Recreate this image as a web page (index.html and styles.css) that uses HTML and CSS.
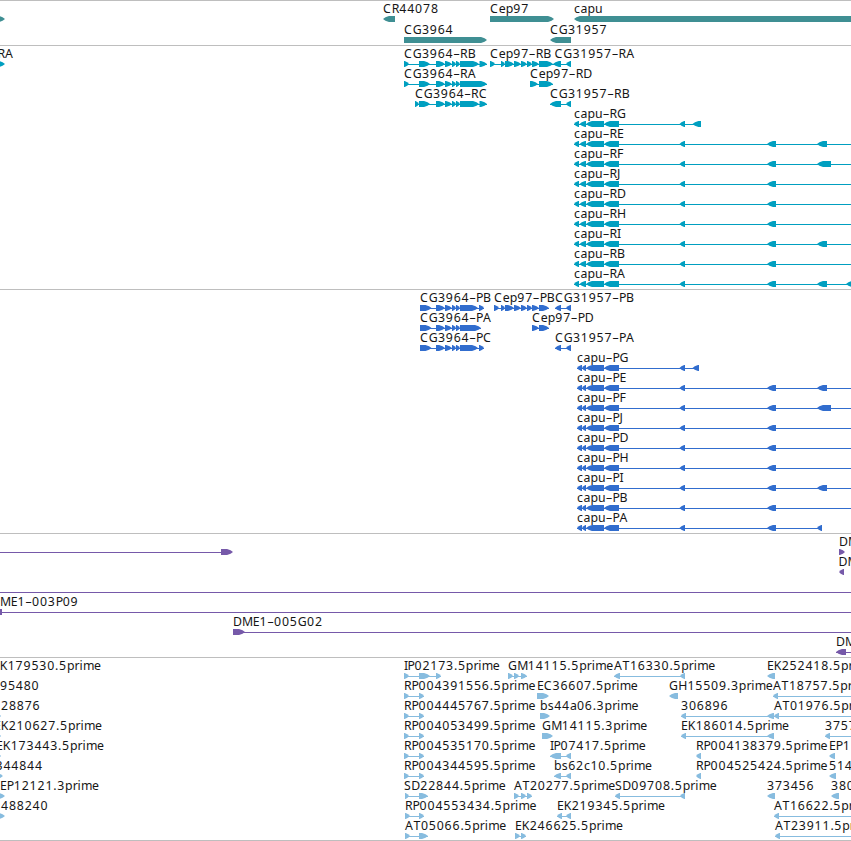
FILE: index.html
```html
<!DOCTYPE html>
<html lang="en">
<head>
    <meta charset="UTF-8">
    <meta name="viewport" content="width=device-width, initial-scale=1.0">
    <title>Genome Browser</title>
    <link rel="stylesheet" href="styles.css">
</head>
<body>
    <main class="browser">
        <svg class="track track-gene" id="genes"></svg>
        <svg class="track track-mrna" id="mrna"></svg>
        <svg class="track track-cds" id="cds"></svg>
        <svg class="track track-bac" id="bac"></svg>
        <svg class="track track-est" id="est"></svg>
    </main>
    <script src="tracks.js"></script>
</body>
</html>
```

FILE: styles.css
```css
body {
    margin: 0;
    background: white;
    overflow: hidden;
}
.browser {
    display: flex;
    flex-direction: column;
    border-bottom: 1px solid #bebebe;
}
.track {
    display: block;
    width: 100%;
    box-sizing: border-box;
    border-top: 1px solid #bebebe;
    overflow: hidden;
}
.track-gene {
    height: 45px;
    fill: #3f8f93;
}
.track-mrna {
    height: 244px;
    fill: #009fc0;
}
.track-cds {
    height: 244px;
    fill: #316dce;
}
.track-bac {
    height: 124px;
    fill: #7659a9;
}
.track-est {
    height: 183px;
    fill: #87bcdf;
}
.intron {
    shape-rendering: crispEdges;
}
.label {
    font-family: "Noto Sans", "Open Sans", sans-serif;
    font-size: 12.3px;
    fill: #161616;
}
```

FILE: tracks.js
```js
const SVG_NS = 'http://www.w3.org/2000/svg';
const FONT_UNIT = 0.0125;

// glyph advances, 1/1000 em
const ADVANCE = {
    '-': 530, '.': 316,
    a: 555, b: 622, c: 514, e: 560, i: 280, m: 880, p: 610, r: 390, s: 511, u: 630,
    A: 686, B: 561, C: 694, D: 730, E: 545, F: 520, G: 740, H: 735, I: 280, J: 276,
    K: 632, M: 847, P: 558, R: 610, S: 577, T: 583
};

function add(svg, tag, attrs) {
    const el = document.createElementNS(SVG_NS, tag);
    for (const key in attrs) el.setAttribute(key, attrs[key]);
    svg.appendChild(el);
    return el;
}

function drawLabel(svg, x, y, text) {
    const xs = [];
    for (const ch of text) {
        xs.push(x.toFixed(1));
        x += (ADVANCE[ch] || 632) * FONT_UNIT;
    }
    // en dash, a plain hyphen is too short here
    add(svg, 'text', { class: 'label', x: xs.join(' '), y: y }).textContent = text.replace('-', '–');
}

function drawExon(svg, a, b, y, dir) {
    const head = Math.min(7, b - a);
    const tip = dir > 0 ? b : a;
    const back = dir > 0 ? a : b;
    const neck = tip - dir * head * 0.85;
    const mid = tip - dir * head * 0.35;
    const points = [[back, y], [neck, y], [mid, y + 1.3], [tip, y + 3], [mid, y + 4.7], [neck, y + 6], [back, y + 6]];
    add(svg, 'polygon', { points: points.map(p => p.join(',')).join(' ') });
}

// feature: [row, labelX, name, direction, [exon start, end, ...], lineStart, lineEnd]
function drawTrack(id, features, pitch = 20) {
    const svg = document.getElementById(id);
    for (const [row, x, name, dir, ex, from, to] of features) {
        const base = 12 + row * pitch;
        const start = from === undefined ? ex[0] : from;
        const end = to === undefined ? ex[ex.length - 1] : to;
        if (ex.length > 2 || to !== undefined) {
            add(svg, 'rect', { class: 'intron', x: start, y: base + 6, width: end - start, height: 1 });
        }
        for (let i = 0; i < ex.length; i += 2) drawExon(svg, ex[i], ex[i + 1], base + 3, dir);
        if (name) drawLabel(svg, x, base, name);
    }
}

drawTrack('genes', [
    [0, 0, '', 1, [-40, 5]],
    [0, 383, 'CR44078', -1, [383, 395]],
    [0, 490, 'Cep97', 1, [490, 554]],
    [0, 574, 'capu', -1, [574, 900]],
    [1, 404, 'CG3964', 1, [404, 487]],
    [1, 550, 'CG31957', -1, [550, 571]]
], 21);

const cgMid = [436, 445, 445, 452, 452, 456, 456, 460];
const cepMid = [501, 505, 505, 514, 514, 521, 521, 527, 527, 532, 532, 539];
const capuTail = [586, 604, 604, 619, 679.5, 685];
const ex2 = [767, 776];
const ex3 = [817, 827];

function capuRows(prefix, head, last) {
    const x = head[0];
    const base = head.concat(capuTail);
    return [
        [3, x, prefix + 'G', -1, base.concat(last)],
        [4, x, prefix + 'E', -1, base.concat(ex2, ex3), x, 860],
        [5, x, prefix + 'F', -1, base.concat(ex2, [817, 831]), x, 860],
        [6, x, prefix + 'J', -1, base.concat(ex2), x, 860],
        [7, x, prefix + 'D', -1, base.concat(ex2), x, 860],
        [8, x, prefix + 'H', -1, base.concat(ex2), x, 860],
        [9, x, prefix + 'I', -1, base.concat(ex2, ex3), x, 860],
        [10, x, prefix + 'B', -1, base.concat(ex2), x, 860]
    ];
}

drawTrack('mrna', [
    [0, -2.5, 'RA', 1, [-4, 5]],
    [0, 404, 'CG3964-RB', 1, [404, 409, 419, 430, ...cgMid, 460, 479, 479.5, 487]],
    [0, 490, 'Cep97-RB', 1, [490, 495, ...cepMid, 539, 553]],
    [0, 554.5, 'CG31957-RA', -1, [553, 561, 566, 571]],
    [1, 404, 'CG3964-RA', 1, [404, 409, 419, 430, ...cgMid, 460, 487]],
    [1, 530, 'Cep97-RD', 1, [530, 538, 539, 553]],
    [2, 415, 'CG3964-RC', 1, [415, 419, 419, 430, ...cgMid, 460, 479, 479.5, 487]],
    [2, 550, 'CG31957-RB', -1, [550, 561, 566, 571]],
    ...capuRows('capu-R', [574, 579, 579.5, 586], [692.5, 701]),
    [11, 574, 'capu-RA', -1, [574, 579, 579.5, 586, ...capuTail, ...ex2, ...ex3, 846, 858]]
]);

drawTrack('cds', [
    [0, 420, 'CG3964-PB', 1, [420, 431.5, ...cgMid, 460, 478, 479, 484]],
    [0, 494, 'Cep97-PB', 1, [494, 499, ...cepMid, 539, 549]],
    [0, 555, 'CG31957-PB', -1, [555, 561, 566, 571]],
    [1, 420, 'CG3964-PA', 1, [420, 431.5, ...cgMid, 460, 481]],
    [1, 532, 'Cep97-PD', 1, [532, 539, 539, 549]],
    [2, 420, 'CG3964-PC', 1, [420, 431.5, ...cgMid, 460, 478, 479, 484]],
    [2, 555, 'CG31957-PA', -1, [555, 561, 566, 571]],
    ...capuRows('capu-P', [577, 582, 582, 586], [692.5, 699]),
    [11, 577, 'capu-PA', -1, [577, 582, 582, 586, ...capuTail, ...ex2, 817, 822]]
]);

drawTrack('bac', [
    [0, 0, '', 1, [221, 233], 0, 221],
    [0, 839, 'DME1', 1, [839, 845]],
    [1, 838.5, 'DME1', -1, [839, 844]],
    [2, 0, '', 1, [], 0, 851],
    [3, -9, 'DME1-003P09', -1, [-9, 2], 0, 851],
    [4, 233, 'DME1-005G02', 1, [233, 245], 233, 851],
    [5, 836, 'DME1', -1, [836, 846], 836, 851]
]);

const rpExons = [404, 409, 419, 424];

drawTrack('est', [
    [0, -7, 'EK179530.5prime', 1, []],
    [1, 0, '95480', 1, []],
    [2, 1, '28876', 1, [-4, 1]],
    [3, -6, 'EK210627.5prime', 1, [-4, 1]],
    [4, -4, 'EK173443.5prime', 1, [-4, 1]],
    [5, -4.5, '344844', 1, [-4, 3]],
    [6, 0, 'EP12121.3prime', 1, [-4, 5]],
    [7, 1, '488240', 1, [-4, 5]],

    [0, 404, 'IP02173.5prime', 1, [404, 409, 419, 430, 436, 441]],
    [1, 404, 'RP004391556.5prime', 1, rpExons],
    [2, 404, 'RP004445767.5prime', 1, rpExons],
    [3, 404, 'RP004053499.5prime', 1, rpExons],
    [4, 404, 'RP004535170.5prime', 1, rpExons],
    [5, 404, 'RP004344595.5prime', 1, rpExons],
    [6, 404, 'SD22844.5prime', 1, [405, 409, 419, 428]],
    [7, 405, 'RP004553434.5prime', 1, [405, 410, 419, 424]],
    [8, 405, 'AT05066.5prime', 1, [405, 410, 419, 428]],

    [0, 508, 'GM14115.5prime', 1, [508, 513, 514, 519, 521, 527]],
    [1, 537, 'EC36607.5prime', 1, [537, 549]],
    [2, 540, 'bs44a06.3prime', 1, [540, 550]],
    [3, 542, 'GM14115.3prime', 1, [542, 553]],
    [4, 550, 'IP07417.5prime', -1, [550, 561, 566, 571]],
    [5, 554, 'bs62c10.5prime', -1, [554, 561, 566, 571]],
    [6, 514, 'AT20277.5prime', 1, [514, 519, 521, 526, 527, 532]],
    [7, 557, 'EK219345.5prime', -1, [557, 562, 566, 571]],
    [8, 515, 'EK246625.5prime', 1, [515, 520, 521, 526]],

    [0, 614, 'AT16330.5prime', -1, [614, 620, 680, 685]],
    [1, 669, 'GH15509.3prime', -1, [669, 678]],
    [2, 681, '306896', -1, [681, 686, 767, 774]],
    [3, 681, 'EK186014.5prime', -1, [681, 686, 767, 774]],
    [4, 696, 'RP004138379.5prime', -1, [696, 701]],
    [5, 696, 'RP004525424.5prime', -1, [696, 701]],
    [6, 615, 'SD09708.5prime', -1, [615, 620, 680, 685]],
    [6, 767, '373456', -1, [767, 775]],

    [0, 767, 'EK252418.5prime', -1, [767, 775]],
    [1, 773, 'AT18757.5prime', -1, [773, 778], 773, 851],
    [2, 774, 'AT01976.5prime', -1, [774, 779], 774, 851],
    [3, 825, '3757', -1, [825, 830], 825, 851],
    [4, 829, 'EP1', -1, [829, 835]],
    [5, 829, '514', -1, [829, 836]],
    [6, 831, '380', -1, [831, 839]],
    [7, 774, 'AT16622.5prime', -1, [774, 779], 774, 851],
    [8, 775, 'AT23911.5prime', -1, [775, 780], 775, 851]
]);
```
